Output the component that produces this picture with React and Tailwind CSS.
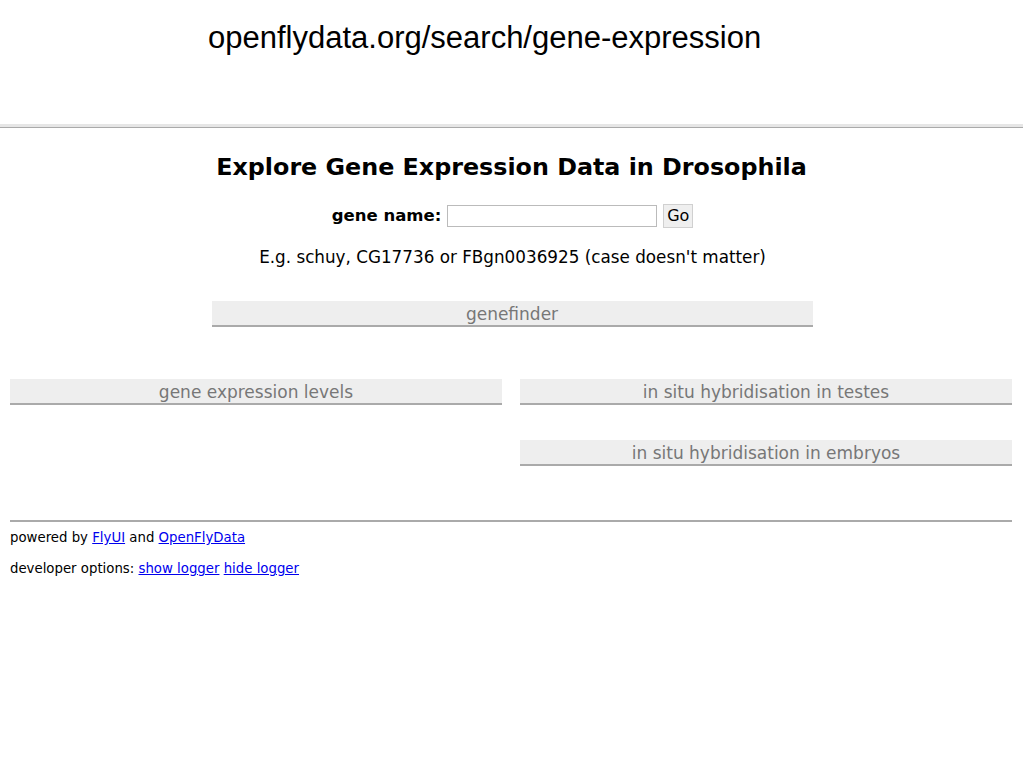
export default function App() {
    const bar = "h-[26px] pt-[3px] flex items-center justify-center bg-[#eeeeee] border-b-2 border-[#aaaaaa] text-[#777777] text-[17px]";

    return (
        <div className="w-[1023px] h-[767px] bg-white overflow-hidden" style={{ fontFamily: '"DejaVu Sans", sans-serif' }}>
            {/* slide title */}
            <div className="h-[124px] pl-[208px] pt-[19px]">
                <div className="text-[31px] text-black leading-[38px]" style={{ fontFamily: '"Liberation Sans", Arial, sans-serif' }}>
                    openflydata.org/search/gene-expression
                </div>
            </div>
            <div className="h-[3px] bg-[#e6e6e6]"></div>
            <div className="h-[1px] bg-[#aaaaaa]"></div>

            {/* page */}
            <div className="flex flex-col items-center">
                <h1 className="mt-[24px] text-[23.8px] font-bold leading-[30px] text-black">
                    Explore Gene Expression Data in Drosophila
                </h1>
                <div className="mt-[22px] flex items-center h-[24px] ml-[2px]">
                    <span className="text-[16.5px] font-bold text-black">gene name:</span>
                    <input type="text" className="ml-[6px] w-[210px] h-[22px] border border-[#bbbbbb] bg-white" />
                    <button className="ml-[6px] w-[30px] h-[24px] bg-[#efefef] border border-[#d0d0d0] text-[16px] text-black flex items-center justify-center">
                        Go
                    </button>
                </div>
                <div className="mt-[17px] text-[16.8px] leading-[24px] text-black ml-[2px]">
                    E.g. schuy, CG17736 or FBgn0036925 (case doesn't matter)
                </div>
                <div className={bar + " mt-[32px] w-[601px] ml-[1px]"}>genefinder</div>
            </div>

            <div className="mt-[52px] px-[10px] grid grid-cols-2 gap-x-[18px] w-[1022px]">
                <div className={bar}>gene expression levels</div>
                <div className="flex flex-col gap-[35px]">
                    <div className={bar}>in situ hybridisation in testes</div>
                    <div className={bar}>in situ hybridisation in embryos</div>
                </div>
            </div>

            {/* footer */}
            <div className="mx-[10px] w-[1002px] mt-[54px] h-[2px] bg-[#aaaaaa]"></div>
            <div className="px-[10px] text-[13.3px] text-black">
                <div className="mt-[7px] leading-[18px]">
                    powered by <a href="#" className="text-[#0000ee] underline">FlyUI</a> and{" "}
                    <a href="#" className="text-[#0000ee] underline">OpenFlyData</a>
                </div>
                <div className="mt-[13px] leading-[18px]">
                    developer options: <a href="#" className="text-[#0000ee] underline">show logger</a>{" "}
                    <a href="#" className="text-[#0000ee] underline">hide logger</a>
                </div>
            </div>
        </div>
    );
}
